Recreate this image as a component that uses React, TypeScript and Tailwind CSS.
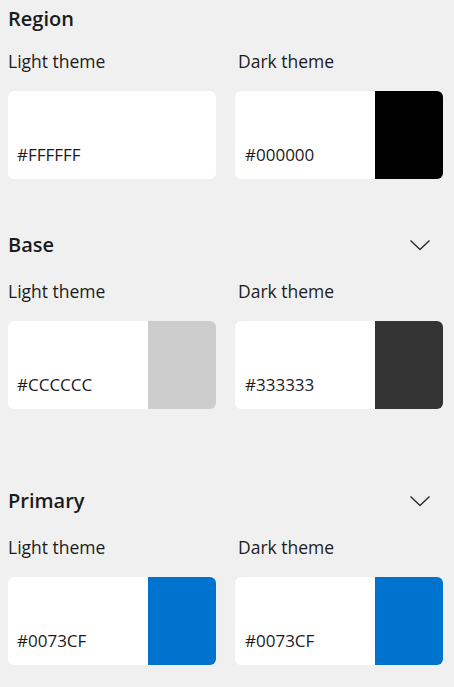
import React from "react";

interface Pair {
  light: string;
  dark: string;
  lightSwatch?: string;
  darkSwatch?: string;
}

interface Section {
  title: string;
  pair: Pair;
  chevron: boolean;
  top: string;
  labelTop: string;
}

const sections: Section[] = [
  {
    title: "Region",
    pair: { light: "#FFFFFF", dark: "#000000", darkSwatch: "bg-[#000000]" },
    chevron: false,
    top: "mt-0",
    labelTop: "mt-[8px]",
  },
  {
    title: "Base",
    pair: { light: "#CCCCCC", dark: "#333333", lightSwatch: "bg-[#cccccc]", darkSwatch: "bg-[#333333]" },
    chevron: true,
    top: "mt-[47px]",
    labelTop: "mt-[12px]",
  },
  {
    title: "Primary",
    pair: { light: "#0073CF", dark: "#0073CF", lightSwatch: "bg-[#0073cf]", darkSwatch: "bg-[#0073cf]" },
    chevron: true,
    top: "mt-[73px]",
    labelTop: "mt-[12px]",
  },
];

const Chevron = () => (
  <svg width="22" height="12" viewBox="0 0 22 12" fill="none">
    <polyline points="1.5,1.5 11,10.5 20.5,1.5" stroke="#2b2b2b" strokeWidth="1.4" strokeLinejoin="round" />
  </svg>
);

const ColorCard = ({ label, value, swatch, indent }: { label: string; value: string; swatch?: string; indent: string }) => (
  <div>
    <div className={`h-[30px] flex items-center text-[17.5px] text-[#1b1b1b] ${indent}`}>{label}</div>
    <div className="mt-[15px] h-[88px] bg-white rounded-[6px] flex overflow-hidden">
      <div className={`flex-1 flex items-end pb-[12px] ${indent === "pl-0" ? "pl-[9px]" : "pl-[10px]"}`}>
        <span className="text-[17px] leading-[24px] text-[#1b1b1b]">{value}</span>
      </div>
      {swatch && <div className={`w-[68px] ${swatch}`} />}
    </div>
  </div>
);

export default function App() {
  return (
    <div
      className="w-[454px] h-[687px] bg-[#f0f0f0] pl-[8px] pr-[11px] overflow-hidden"
      style={{ fontFamily: '"Open Sans", "Noto Sans", sans-serif' }}
    >
      {sections.map((s) => (
        <div key={s.title} className={s.top}>
          <div className="h-[38px] flex items-center justify-between pr-[12px]">
            <span className="text-[20px] font-semibold text-[#1b1b1b]">{s.title}</span>
            {s.chevron && <Chevron />}
          </div>
          <div className={`${s.labelTop} grid grid-cols-2 gap-x-[19px]`}>
            <ColorCard label="Light theme" value={s.pair.light} swatch={s.pair.lightSwatch} indent="pl-0" />
            <ColorCard label="Dark theme" value={s.pair.dark} swatch={s.pair.darkSwatch} indent="pl-[3px]" />
          </div>
        </div>
      ))}
    </div>
  );
}
